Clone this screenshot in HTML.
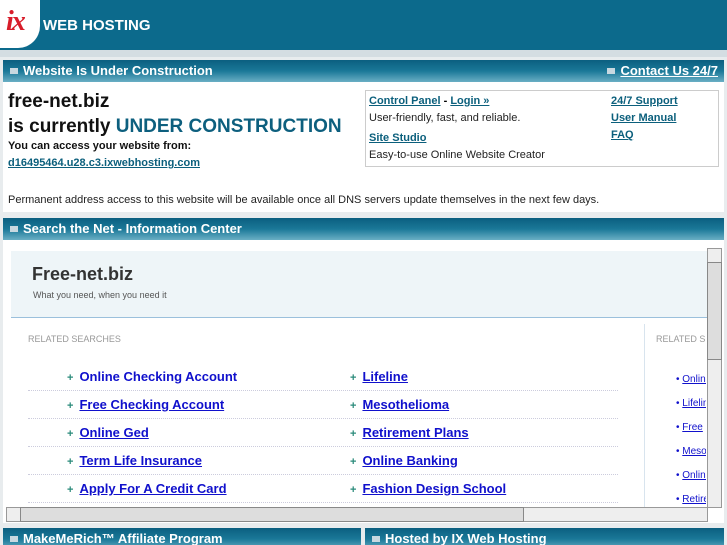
<!DOCTYPE html>
<html><head><style>
html,body{margin:0;width:727px;height:545px;overflow:hidden}
body{background:#e8ecee;font-family:"Liberation Sans",sans-serif;position:relative}
.a{position:absolute;white-space:nowrap}
.bar{position:absolute;height:22px;background:linear-gradient(#0b5f80,#1a7898 50%,#6aaec4);color:#fff;font-weight:bold;font-size:13px;line-height:22px;white-space:nowrap;overflow:hidden}
.sq{display:inline-block;width:8px;height:6px;background:#c8d8e0;margin:0 5px 1px 7px;vertical-align:middle}
a{color:#0d5f7e;font-weight:bold}
.tl{color:#0b5f7c;font-weight:bold;text-decoration:underline;font-size:11px}
.r a{color:#1010cc;font-size:13px;font-weight:bold}
.plus{color:#2a8a7a;font-size:11px;font-weight:bold;margin-right:6px}
.row{position:absolute;left:28px;width:590px;height:28px;border-bottom:1px dotted #ccd}
</style></head><body>
<div class="a" style="left:0;top:0;width:727px;height:50px;background:#0c6a8c"></div>
<div class="a" style="left:0;top:0;width:40px;height:48px;background:#fff;border-radius:0 0 22px 0"></div>
<div class="a" style="left:6px;top:6px;font:bold italic 28px 'Liberation Serif',serif;color:#d81d2a;letter-spacing:-2px">ix</div>
<div class="a" style="left:43px;top:17px;color:#fff;font-weight:bold;font-size:15px">WEB HOSTING</div>
<div class="a" style="left:0;top:50px;width:727px;height:7px;background:#d4dde2"></div>
<div class="bar" style="left:3px;top:60px;width:721px"><span class="sq"></span>Website Is Under Construction<span style="position:absolute;right:6px"><span class="sq"></span><u>Contact Us 24/7</u></span></div>
<div class="a" style="left:3px;top:82px;width:721px;height:130px;background:#fff"></div>
<div class="a" style="left:8px;top:91px;font-size:19px;font-weight:bold;color:#111">free-net.biz</div>
<div class="a" style="left:8px;top:116px;font-size:19px;font-weight:bold;color:#111">is currently <span style="color:#0d5f7e">UNDER CONSTRUCTION</span></div>
<div class="a" style="left:8px;top:140px;font-size:11px;font-weight:bold;color:#111">You can access your website from:</div>
<div class="a tl" style="left:8px;top:157px">d16495464.u28.c3.ixwebhosting.com</div>
<div class="a" style="left:8px;top:194px;font-size:11px;color:#222">Permanent address access to this website will be available once all DNS servers update themselves in the next few days.</div>
<div class="a" style="left:365px;top:90px;width:352px;height:75px;border:1px solid #ccc"></div>
<div class="a" style="left:369px;top:95px;font-size:11px"><span class="tl">Control Panel</span> <b>-</b> <span class="tl">Login »</span></div>
<div class="a" style="left:369px;top:112px;font-size:11px;color:#222">User-friendly, fast, and reliable.</div>
<div class="a tl" style="left:369px;top:132px">Site Studio</div>
<div class="a" style="left:369px;top:149px;font-size:11px;color:#222">Easy-to-use Online Website Creator</div>
<div class="a tl" style="left:611px;top:95px">24/7 Support</div>
<div class="a tl" style="left:611px;top:112px">User Manual</div>
<div class="a tl" style="left:611px;top:129px">FAQ</div>
<div class="bar" style="left:3px;top:218px;width:721px"><span class="sq"></span>Search the Net - Information Center</div>
<div class="a" style="left:3px;top:240px;width:721px;height:283px;background:#fff"></div>
<div class="a" style="left:11px;top:251px;width:696px;height:66px;background:#eef5f8;border-bottom:1px solid #9bc0dc"></div>
<div class="a" style="left:32px;top:264px;font-size:18px;font-weight:bold;color:#333">Free-net.biz</div>
<div class="a" style="left:33px;top:290px;font-size:9px;color:#555">What you need, when you need it</div>
<div class="a" style="left:28px;top:334px;font-size:9px;color:#999">RELATED SEARCHES</div>
<div class="a" style="left:644px;top:324px;width:1px;height:184px;background:#d8e4ee"></div>
<div class="a" style="left:656px;top:334px;font-size:9px;color:#999">RELATED S</div>
<div class="row r" style="top:362px"></div><div class="row r" style="top:390px"></div><div class="row r" style="top:418px"></div><div class="row r" style="top:446px"></div><div class="row r" style="top:474px"></div>
<div class="r">
<div class="a" style="left:67px;top:368px"><span class="plus">+</span><a>Online Checking Account</a></div>
<div class="a" style="left:67px;top:396px"><span class="plus">+</span><a><u>Free Checking Account</u></a></div>
<div class="a" style="left:67px;top:424px"><span class="plus">+</span><a><u>Online Ged</u></a></div>
<div class="a" style="left:67px;top:452px"><span class="plus">+</span><a><u>Term Life Insurance</u></a></div>
<div class="a" style="left:67px;top:480px"><span class="plus">+</span><a><u>Apply For A Credit Card</u></a></div>
<div class="a" style="left:350px;top:368px"><span class="plus">+</span><a><u>Lifeline</u></a></div>
<div class="a" style="left:350px;top:396px"><span class="plus">+</span><a><u>Mesothelioma</u></a></div>
<div class="a" style="left:350px;top:424px"><span class="plus">+</span><a><u>Retirement Plans</u></a></div>
<div class="a" style="left:350px;top:452px"><span class="plus">+</span><a><u>Online Banking</u></a></div>
<div class="a" style="left:350px;top:480px"><span class="plus">+</span><a><u>Fashion Design School</u></a></div>
</div>
<div class="a" style="left:676px;top:368px;width:30px;height:138px;overflow:hidden;font-size:10px;line-height:24px;color:#11c">• <u>Online</u><br>• <u>Lifeline</u><br>• <u>Free</u><br>• <u>Meso</u><br>• <u>Online</u><br>• <u>Retire</u></div>
<div class="a" style="left:707px;top:248px;width:13px;height:258px;background:#eee;border:1px solid #999"></div>
<div class="a" style="left:707px;top:262px;width:13px;height:96px;background:#ddd;border:1px solid #888"></div>
<div class="a" style="left:6px;top:507px;width:700px;height:13px;background:#eee;border:1px solid #999"></div>
<div class="a" style="left:20px;top:507px;width:502px;height:13px;background:#ddd;border:1px solid #888"></div>
<div class="bar" style="left:3px;top:528px;width:358px"><span class="sq"></span>MakeMeRich™ Affiliate Program</div>
<div class="bar" style="left:365px;top:528px;width:359px"><span class="sq"></span>Hosted by IX Web Hosting</div>
</body></html>
